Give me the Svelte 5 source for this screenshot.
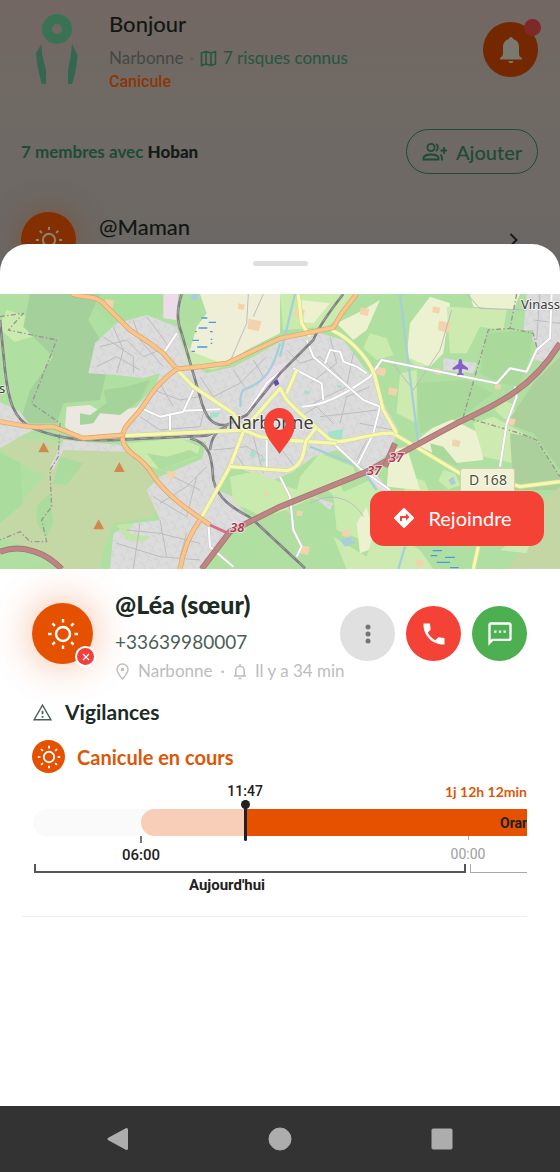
<script lang="ts">
  const HOUR = 18;
  const DAY = 24 * HOUR + 3;

  const start = 6;
  const now = 11 + 47 / 60;

  const rays = [0, 45, 90, 135, 180, 225, 270, 315];

  // map layers, drawn back to front
  const areas = [
    { color: '#a4d09b', d: 'M90 12H300L265 90 330 200 300 330 190 340 170 400 60 400 90 300 160 200 70 110Z' },
    { color: '#abdf9e', d: 'M300 12H500L480 80 330 100 290 50Z' },
    { color: '#c4d8a6', d: 'M190 478 375 480 440 520 480 620 460 680 340 700 310 780 300 837H190L130 790 0 740V600L60 640 130 560 0 480V440L160 450Z' },
    { color: '#a9dc9d', d: 'M180 500 250 520 200 585 160 580ZM0 490 60 520 70 640 0 700ZM110 650 150 610 160 700 140 740 110 700Z' },
    { color: '#dcdcdd', d: 'M285 160 350 100 440 75 530 110 560 210 620 250 700 230 760 200 850 150 960 130 1030 150 1090 230 1120 260 1150 340 1195 420 1165 490 1100 540 1010 480 940 500 880 545 820 570 700 530 640 600 600 530 620 455 500 445 370 430 400 360 470 280 480 250 430 265 350 255 265 250Z' },
    { color: '#dcdcdd', d: 'M440 600 480 560 620 500 650 600 700 620 750 690 660 760 600 837H330L340 730 400 700 480 690Z' },
    { color: '#dcdcdd', d: 'M0 335 60 365 100 420 60 440 0 475ZM190 450 360 465 380 485 190 480 160 540 150 530Z' },
    { color: '#dcdcdd', d: 'M1580 12H1680V170L1640 215 1600 210 1610 160 1570 130Z' },
    { color: '#efefd8', d: 'M600 12H840V130L740 180 680 225 600 210 570 180 590 110 620 70Z' },
    { color: '#ece8e0', d: 'M200 350 270 345 310 370 420 350 390 400 360 435 240 440 195 410Z' },
    { color: '#a5d49b', d: 'M240 370 270 375 320 340 310 300 380 290 450 270 420 330 360 375 300 370 280 400 240 405Z' },
    { color: '#c9ebab', d: 'M380 460 540 445 600 470 590 500 480 540 430 520Z' },
    { color: '#aedd9f', d: 'M480 540 560 510 600 495 570 480 500 500 440 490Z' },
    { color: '#ecdce8', d: 'M490 12H535L530 90 490 85Z' },
    { color: '#b0dda0', d: 'M545 45 600 40 605 90 560 110 540 80Z' },
    { color: '#c9ebae', d: 'M545 140 575 185 680 225 640 240 560 225Z' },
    { color: '#e8dce8', d: 'M800 240 860 215 850 270 770 350 740 360ZM1105 560 1130 555 1170 605 1140 600Z' },
    { color: '#c9ebae', d: 'M690 560 760 545 850 580 870 680 800 690 750 660 700 640ZM840 12H1060L1010 90 980 110 850 120Z' },
    { color: '#b1dfa2', d: 'M750 690 860 660 990 830 960 837H850L760 760Z' },
    { color: '#c9ebae', d: 'M900 560 960 490 1060 530 1070 560 880 650ZM1000 620 1110 570 1160 620 1110 680 1110 760 1010 720Z' },
    { color: '#ecf1d0', d: 'M900 30 990 40 940 100 900 95ZM1010 100 1090 60 1140 30 1100 120 1060 150Z' },
    { color: '#ecf1d0', d: 'M1230 100 1290 20 1350 40 1330 190 1290 230 1220 200ZM1340 380 1440 430 1450 510 1360 520 1240 460Z' },
    { color: '#ecf1d0', d: 'M1170 480 1220 470 1260 600 1160 590ZM1410 12H1560L1540 60 1420 50ZM1070 700 1100 650 1130 770 1080 790Z' },
    { color: '#cdebb0', d: 'M1340 50 1520 60 1510 120 1440 110 1400 190 1350 190ZM1200 250 1250 240 1250 400 1190 370ZM1420 400 1480 380 1570 430 1540 520 1450 500Z' },
    { color: '#a9d99b', d: 'M1460 130 1600 120 1590 200 1560 290 1500 280 1440 250ZM1250 280 1400 270 1480 310 1400 370 1260 430ZM1290 460 1330 470 1380 530 1300 500Z' },
    { color: '#acd09c', d: 'M1530 430 1600 440 1680 560V600H1540ZM1600 280 1680 200V540L1600 430 1520 400Z' },
    { color: '#c3d6a4', d: 'M1640 620 1680 590V837H1520L1570 780Z' },
    { color: '#cdebb0', d: 'M1000 740 1100 800 1130 700 1260 780 1300 837H1040ZM1570 730 1630 640 1610 700 1580 790 1500 780Z' },
    { color: '#dcdcdd', d: 'M940 620 1000 640 990 660ZM1330 205 1430 220 1420 250 1330 240Z' }
  ];

  // [x, y, size]
  const fields = [
    [330, 40, 26], [765, 105, 38], [725, 50, 20], [900, 70, 30], [1095, 65, 26], [1335, 110, 36], [1310, 60, 22],
    [1145, 245, 28], [1180, 305, 26], [1370, 460, 24], [1495, 290, 18], [1535, 395, 24], [515, 555, 26],
    [915, 780, 30], [1040, 730, 24], [1260, 820, 24], [900, 670, 18], [800, 610, 14], [1315, 245, 20]
  ];

  const meadows = [
    [20, 60, 60], [120, 300, 44], [390, 60, 50], [620, 130, 34], [640, 245, 40], [960, 20, 34], [1110, 130, 50],
    [1240, 170, 40], [1300, 350, 30], [1230, 560, 44], [1330, 540, 36], [990, 570, 30], [860, 590, 34],
    [1170, 740, 50], [1090, 820, 40], [740, 610, 34], [1500, 330, 36], [1640, 300, 28], [400, 740, 50]
  ];

  const rail = [
    'M545 12C530 60 530 90 545 130L600 320C615 380 635 410 680 405L740 375 840 250 940 150C960 100 1000 50 1030 12',
    'M0 90 15 240C25 330 40 390 100 415 180 450 270 455 380 448L620 437 680 410',
    'M570 445C640 460 635 520 640 570 660 650 740 670 760 690L915 835',
    'M630 480C635 440 650 420 680 410'
  ];

  const orange = [
    'M215 12C260 25 290 15 315 45L390 120 450 160 490 190 530 237 600 230 680 220 840 145 1000 113 1025 70 1070 12',
    'M530 237C460 290 450 320 425 355 390 400 365 410 368 450 380 500 420 490 455 550 500 620 580 670 630 705',
    'M0 395C60 405 90 415 160 410L250 445 370 435',
    'M600 690C570 730 550 780 540 837'
  ];

  const yellow = [
    'M370 437 730 420 840 295 860 330 900 370 980 440C1010 480 1120 420 1180 430L1380 550C1440 570 1540 580 1560 590L1680 575',
    'M530 237 580 290 640 330 700 370 730 420 780 440 850 450 1010 460',
    'M730 425 690 530 600 690',
    'M690 530 860 542C920 530 910 460 920 450L950 410',
    'M995 120C1060 150 1120 220 1130 280L1150 360 1190 430',
    'M895 12 905 100 930 140M890 240 860 310',
    'M1420 837 1435 770'
  ];

  const white = [
    'M530 130 490 190',
    'M425 355 480 380 550 365 580 300M510 370V420M550 362 660 358',
    'M740 370 800 280 840 245',
    'M905 350C970 350 1040 310 1110 260L1145 210 1490 280 1530 235 1580 245 1610 180 1650 145 1655 12',
    'M880 235 965 280 970 330M920 150 940 200 1010 260 1090 330 1140 350 1120 430 1070 530M975 220 990 180 1020 185 1030 215 1070 230 1100 250',
    'M1000 460 1080 535 1170 600M800 450V530M840 560 870 620 880 720 905 770 890 800',
    'M1545 290 1550 320 1520 400 1500 530M625 700 630 770 700 830'
  ];

  const streets = [
    'M300 170 380 150 430 200 480 180M290 230 350 200 420 240M340 110 370 180 350 250M400 90 420 150 490 230M440 80 500 160M310 140 400 200 400 250',
    'M460 300 540 330 600 320M480 280 520 350M600 260 640 320 720 280 800 200M700 240 740 300M760 210 790 260M420 380 480 420 600 410 610 370',
    'M480 640 560 590 620 530M520 560 600 600M460 620 560 680 590 560M380 720 480 730 600 760M420 700 400 837M480 690 500 800M350 760 480 800 600 810M560 730 540 800',
    'M860 180 900 220 960 200 1030 270M990 140 1010 220 930 280M1060 190 1040 290 940 340M1110 290 1040 320 1020 400M1130 360 1050 370 960 380M1180 420 1080 400M1100 450 1070 510M900 380 950 350 1000 400',
    'M640 480 740 470 790 500M700 480 740 540M760 440 790 550M840 470 890 540M1590 40 1670 60M1600 90 1680 100M1620 12 1610 150',
    'M745 12 740 100 690 215M790 12 760 80M1355 60 1320 180 1240 300 1170 210M930 640C1000 600 1060 630 1090 680M1400 12 1440 55 1580 60'
  ];

  const motorway = [
    'M0 785C70 760 140 790 185 837',
    'M605 837 690 725 840 650 1100 545 1380 395C1500 340 1600 290 1680 160',
    'M1155 530 1185 460'
  ];

  const paths = [
    'M0 80 70 70 25 120 170 150 95 340 180 400 175 500 150 540 155 650 125 690 140 755 90 755 60 725 0 750',
    'M1550 12 1530 115 1465 120 1390 380 1560 430 1610 450 1680 560M1530 115 1600 130 1615 190'
  ];

  const peaks = [
    [131, 473], [358, 532], [296, 704]
  ];
</script>

{#snippet sun(size: number)}
  <svg width={size} height={size} viewBox="0 0 32 32" fill="none" stroke="currentColor" stroke-width="2.400">
    <circle cx="16" cy="16" r="7" />
    {#each rays as angle}
      <path d="M16 1v3.5" transform="rotate({angle} 16 16)" />
    {/each}
  </svg>
{/snippet}

<div class="phone">
  <main class="home">
    <header class="hello">
      <svg class="logo" width="42" height="70" viewBox="0 0 42 70">
        <circle cx="21" cy="15" r="10" fill="none" stroke="#397353" stroke-width="10" />
        <path d="M5.500 30L0 39C1 51 3 61 6 70H10V56L6 40ZM36 30L41.500 41C41 52 39 61 36 70H32V56L35 40Z" fill="#346650" />
      </svg>
      <div class="intro">
        <h1>Bonjour</h1>
        <p class="place">
          <span>Narbonne</span>
          <span class="sep">·</span>
          <svg width="17" height="17" viewBox="0 0 17 17" fill="none" stroke="#23573e" stroke-width="1.600">
            <path d="M1.500 3l4.500-1.500 5 1.500 4.500-1.500v12.500L11 15.500 6 14l-4.500 1.500zM6 1.500V14M11 3v12.500" />
          </svg>
          <a href="#risques">7 risques connus</a>
        </p>
        <p class="alert">Canicule</p>
      </div>
      <button class="bell" aria-label="Notifications">
        <svg width="24" height="28" viewBox="0 0 24 28" fill="#79796f">
          <path d="M12 1c1.500 0 2 1 2 2 4 1 6 4 6 8v7c0 2 1 3 3 4v1.500H1V22c1-1 3-2 3-4v-7c0-4 2-7 6-8 0-1 .5-2 2-2zM9.500 25h5c-.5 3-4.500 3-5 0z" />
        </svg>
        <span class="dot"></span>
      </button>
    </header>

    <div class="members">
      <p>7 membres avec <strong>Hoban</strong></p>
      <button class="add">
        <svg width="26" height="18" viewBox="0 0 26 18" fill="none" stroke="currentColor" stroke-width="1.800">
          <circle cx="9" cy="4.500" r="3.600" />
          <path d="M1.500 16.500v-2c1-2 4-3 7.500-3s6.500 1 7.500 3v2zM14 1c2.500 1 2.500 6 0 7M18.500 11.500c1.500 1 1.500 3 1.500 6M22 4v7M18.500 7.500H25" />
        </svg>
        Ajouter
      </button>
    </div>

    <div class="member">
      <span class="avatar">{@render sun(28)}</span>
      <h2>@Maman</h2>
      <svg class="chevron" width="10" height="16" viewBox="0 0 10 16" fill="none" stroke="#1b1b1b" stroke-width="2">
        <path d="M1.500 2l6 6-6 6" />
      </svg>
    </div>
  </main>

  <section class="sheet">
    <div class="grip"><span></span></div>

    <div class="map">
      <svg class="tiles" viewBox="0 0 560 275" preserveAspectRatio="xMidYMid slice">
        <defs>
          <pattern id="blocks" width="34" height="30" patternUnits="userSpaceOnUse" patternTransform="rotate(24)">
            <path d="M0 8H20V30M20 18H34M8 8V0" fill="none" stroke="#c6c6c8" stroke-width="2" />
          </pattern>
        </defs>
        <g transform="translate(0 -4) scale(0.33333)" fill="none" stroke-linejoin="round">
          <path d="M0 0H1680V860H0Z" fill="#afe0a1" />
          {#each meadows as [x, y, s]}
            <path d="M{x} {y}l{s} {s * 0.3} {s * 0.4} {s} {-s} {s * 0.3} {-s * 0.8} {-s * 0.7}z" fill="#c9ebae" />
          {/each}
          {#each areas as area}
            <path d={area.d} fill={area.color} />
            {#if area.color === '#dcdcdd'}
              <path d={area.d} fill="url(#blocks)" opacity="0.6" />
            {/if}
          {/each}
          {#each fields as [x, y, s]}
            <path d="M{x - s / 2} {y - s / 2}l{s} {s * 0.2} {-s * 0.2} {s * 0.8} {-s * 0.9} {-s * 0.2}z" fill="#f3d3ad" />
          {/each}
          <path d="M350 705 400 700 385 730 450 740 430 755 380 750Z" fill="#c4e5a8" />
          <path d="M630 370l30-5-5 15-25 5zM755 480l14 12-10 14-10-10zM785 500l12 8-6 10-10-6zM985 425l45-8-5 30-40 5zM915 300l16 6-8 10-12-8zM1010 285h16v8h-14z" fill="#a5e2cc" />
          {#each streets as d}
            <path {d} stroke="#bdbcc0" stroke-width="3" />
          {/each}
          <path d="M840 160C820 240 790 280 730 300 715 320 725 340 720 350M1200 12 1225 220 1255 460M885 12 840 200M930 470 1080 530 1130 600M1215 770 1195 837" stroke="#a6cfd8" stroke-width="7" />
          {#each paths as d}
            <path {d} stroke="#9f9297" stroke-width="4" stroke-dasharray="15 7 4 7" />
          {/each}
          {#each white as d}
            <path {d} stroke="#c8c8c8" stroke-width="9" />
            <path {d} stroke="#fff" stroke-width="6" />
          {/each}
          {#each rail as d}
            <path {d} stroke="#808083" stroke-width="8" />
            <path {d} stroke="#b9b9b9" stroke-width="2" stroke-dasharray="22 18" />
          {/each}
          {#each yellow as d}
            <path {d} stroke="#d5d996" stroke-width="14" />
            <path {d} stroke="#f5f8ae" stroke-width="10" />
          {/each}
          {#each orange as d}
            <path {d} stroke="#d7a46a" stroke-width="15" />
            <path {d} stroke="#fac48b" stroke-width="11" />
          {/each}
          <path d="M630 705 685 730" stroke="#d56e88" stroke-width="9" />
          {#each motorway as d}
            <path {d} stroke="#a97374" stroke-width="18" />
            <path {d} stroke="#bd8583" stroke-width="13" />
          {/each}
          <path d="M604 84h18M626 97h22M596 114h26M585 125h5M577 151h20M592 171h30M575 184h10M630 125h8M632 148h5M632 160h5M1298 782h28M1292 797h20M1335 802h30M1310 817h40M1350 833h26" stroke="#4a9ade" stroke-width="4" />
          <path d="M574 12h20v18h-20zM1020 750l30-10 15 20-30 10zM1345 570l15-10 8 20-14 6z" fill="#a9cdda" />
          {#each peaks as [x, y]}
            <path d="M{x - 16} {y + 14}H{x + 16}L{x} {y - 16}Z" fill="#d08a4d" />
          {/each}
          <path d="M1381 207q6 0 6 14l17 13v6l-17-4-2 12 6 5v3l-10-2-10 2v-3l6-5-2-12-17 4v-6l17-13q0-14 6-14z" fill="#8461c4" />
          <path d="M820 275 832 268 838 282 826 289Z" fill="#5e50a8" />
        </g>
        <g class="labels">
          <text x="228" y="135" class="town">Narbonne</text>
          <text x="521" y="15" class="village">Vinass</text>
          <text x="-1" y="99" class="village">s</text>
          <g class="exits">
            <text x="230" y="238">38</text>
            <text x="367" y="181">37</text>
            <text x="389" y="168">37</text>
          </g>
          <rect x="461" y="175" width="53" height="23" rx="2" fill="#f0f1d4" stroke="#d2d3a7" />
          <text x="469" y="191" class="road">D 168</text>
        </g>
        <path
          fill="#f44336"
          fill-rule="evenodd"
          d="M279.500 160C273 150 264 142 264 130C264 121 271 114 279.500 114S295 121 295 130C295 142 286 150 279.500 160ZM279.500 124a6 6 0 1 0 0 12 6 6 0 0 0 0-12z"
        />
      </svg>
      <button class="join">
        <svg width="24" height="24" viewBox="0 0 24 24" fill="currentColor">
          <path d="M21.710 11.290l-9-9c-.39-.39-1.020-.39-1.410 0l-9 9c-.39.39-.39 1.020 0 1.410l9 9c.39.39 1.020.39 1.410 0l9-9c.39-.38.39-1.010 0-1.410zM14 14.500V12h-4v3H8v-4c0-.55.45-1 1-1h5V7.500l3.500 3.500-3.500 3.500z" />
        </svg>
        Rejoindre
      </button>
    </div>

    <div class="contact">
      <span class="avatar large">
        {@render sun(32)}
        <span class="status">
          <svg width="8" height="8" viewBox="0 0 8 8" stroke="#fff" stroke-width="1.200">
            <path d="M1 1l6 6M7 1L1 7" />
          </svg>
        </span>
      </span>
      <div class="who">
        <h2>@Léa (sœur)</h2>
        <a class="tel" href="tel:+33639980007">+33639980007</a>
        <p class="seen">
          <svg width="15" height="17" viewBox="0 0 15 17" fill="none" stroke="currentColor" stroke-width="1.400">
            <path d="M7.500 16C4 12 2 9.500 2 6.500a5.500 5.500 0 0 1 11 0C13 9.500 11 12 7.500 16z" />
            <circle cx="7.500" cy="6.500" r="1" fill="currentColor" />
          </svg>
          <span>Narbonne</span>
          <span>·</span>
          <svg width="14" height="17" viewBox="0 0 14 17" fill="none" stroke="currentColor" stroke-width="1.500">
            <path d="M1 13h12M2.800 13V7.500a4.200 4.200 0 0 1 8.400 0V13M7 3V1M5.500 15.500h3" />
          </svg>
          <span>Il y a 34 min</span>
        </p>
      </div>
      <div class="actions">
        <button class="more" aria-label="Plus">
          <svg width="6" height="20" viewBox="0 0 6 20" fill="#757575">
            <circle cx="3" cy="3" r="2.500" />
            <circle cx="3" cy="10" r="2.500" />
            <circle cx="3" cy="17" r="2.500" />
          </svg>
        </button>
        <button class="call" aria-label="Appeler">
          <svg width="28" height="28" viewBox="0 0 24 24" fill="#fff">
            <path d="M21 15.460l-5.270-.61-2.520 2.520a15.045 15.045 0 0 1-6.590-6.590l2.530-2.530L8.540 3H3.030C2.450 13.180 10.820 21.550 21 20.970v-5.510z" />
          </svg>
        </button>
        <button class="sms" aria-label="Message">
          <svg width="28" height="28" viewBox="0 0 24 24" fill="#fff">
            <path d="M20 2H4c-1.100 0-1.990.9-1.990 2L2 22l4-4h14c1.100 0 2-.9 2-2V4c0-1.100-.9-2-2-2zm0 14H5.170L4 17.170V4h16v12zM7 9h2v2H7zm4 0h2v2h-2zm4 0h2v2h-2z" />
          </svg>
        </button>
      </div>
    </div>

    <div class="alerts">
      <h3>
        <svg width="21" height="21" viewBox="0 0 24 24" fill="#4b5f57">
          <path d="M12 5.200L20.200 19.400H3.800L12 5.200M12 2L1 21h22L12 2zm1 14h-2v2h2v-2zm0-6h-2v4h2v-4z" />
        </svg>
        Vigilances
      </h3>
      <h4><span class="badge">{@render sun(24)}</span>Canicule en cours</h4>

      <div class="timeline">
        <p class="left">1j 12h 12min</p>
        <div class="track">
          <div class="bar past" style="left: {start * HOUR}px"></div>
          <div class="bar current" style="left: {now * HOUR}px">
            <span>Orange</span>
          </div>
        </div>
        <div class="now" style="left: {now * HOUR}px">
          <time>11:47</time>
          <i></i>
        </div>
        <div class="hours">
          <time style="left: {start * HOUR}px">06:00</time>
          <time class="next" style="left: {DAY}px">00:00</time>
        </div>
        <div class="days">
          <span class="day" style="width: {24 * HOUR}px"></span>
          <span class="day next"></span>
        </div>
        <p class="today" style="width: {24 * HOUR}px"><span>Aujourd'hui</span></p>
      </div>
    </div>
  </section>

  <nav>
    <button aria-label="Retour">
      <svg width="24" height="24" viewBox="0 0 24 24"><path d="M20.500 2.500v19L3 12z" stroke-linejoin="round" stroke-width="3" /></svg>
    </button>
    <button aria-label="Accueil">
      <svg width="24" height="24" viewBox="0 0 24 24"><circle cx="12" cy="12" r="11" /></svg>
    </button>
    <button aria-label="Applications">
      <svg width="24" height="24" viewBox="0 0 24 24"><rect x="2" y="2" width="20" height="20" rx="1" stroke-width="1" /></svg>
    </button>
  </nav>
</div>

<style>
  :global(body) {
    background: #fff;
  }

  .phone {
    min-height: 100vh;
    display: flex;
    flex-direction: column;
    font-family: Lato, 'Open Sans', sans-serif;
    color: #1d2b25;
  }

  h1, h2, h3, h4, p {
    margin: 0;
  }

  button {
    border: none;
    padding: 0;
    font: inherit;
    color: inherit;
    cursor: pointer;
    display: flex;
    align-items: center;
    justify-content: center;
  }

  a {
    text-decoration: none;
  }

  svg {
    display: block;
    flex-shrink: 0;
  }

  /* dimmed screen behind the sheet */
  .home {
    height: 284px;
    box-sizing: border-box;
    overflow: hidden;
    background: linear-gradient(#736763, #6f6a64 110px, #6b6765);
    padding: 12px 22px 0 21px;
    color: #111714;
  }

  .hello {
    display: flex;
    height: 80px;
  }

  .logo {
    margin: 2px 31px 0 15px;
  }

  .intro {
    flex: 1;
  }

  h1, .member h2 {
    font-size: 22px;
    line-height: 24px;
    font-weight: 500;
  }

  .place {
    display: flex;
    align-items: center;
    gap: 6px;
    margin-top: 10px;
    font-size: 17px;
    line-height: 24px;
    color: #414845;
    white-space: nowrap;
  }

  .place .sep {
    color: #575d58;
  }

  .place a {
    color: #23573e;
  }

  .alert {
    font: 500 16px/24px Roboto, sans-serif;
    color: #8c3604;
  }

  .bell {
    position: relative;
    width: 55px;
    height: 55px;
    margin-top: 10px;
    border-radius: 50%;
    background: #732800;
  }

  .dot {
    position: absolute;
    top: -3px;
    right: -3px;
    width: 17px;
    height: 17px;
    border-radius: 50%;
    background: #7d2a27;
  }

  .members {
    display: flex;
    align-items: center;
    justify-content: space-between;
    margin-top: 37px;
    font-size: 17px;
    font-weight: 700;
    color: #1e4b35;
  }

  .members strong {
    color: #141a17;
  }

  .add {
    width: 132px;
    height: 45px;
    box-sizing: border-box;
    gap: 8px;
    border: 1px solid #1e4b35;
    border-radius: 23px;
    background: none;
    font-size: 20px;
    font-weight: 500;
  }

  .member {
    display: flex;
    margin-top: 38px;
  }

  .member h2 {
    flex: 1;
    margin: 3px 0 0 23px;
  }

  .avatar {
    position: relative;
    display: flex;
    align-items: center;
    justify-content: center;
    width: 55px;
    height: 55px;
    flex-shrink: 0;
    border-radius: 50%;
    background: #842f00;
    color: #8d8079;
    box-shadow: 0 0 32px rgba(140, 60, 10, 0.45);
  }

  .chevron {
    margin: 20px 19px 0 0;
  }

  .sheet {
    position: relative;
    flex: 1;
    margin-top: -40px;
    border-radius: 28px 28px 0 0;
    background: #fff;
  }

  .grip {
    height: 50px;
    display: flex;
    justify-content: center;
  }

  .grip span {
    width: 55px;
    height: 5px;
    margin-top: 17px;
    border-radius: 3px;
    background: #dedede;
  }

  .map {
    position: relative;
    height: 275px;
    overflow: hidden;
  }

  .tiles {
    width: 100%;
    height: 100%;
  }

  .labels {
    font-family: 'Noto Sans', sans-serif;
    fill: #3c3c3c;
    stroke: rgba(255, 255, 255, 0.6);
    stroke-width: 2px;
    paint-order: stroke;
  }

  .town {
    font-size: 18px;
  }

  .village {
    font-size: 13px;
  }

  .road {
    font-size: 14px;
    fill: #4f5136;
  }

  .exits {
    font-size: 13px;
    font-style: italic;
    font-weight: 600;
    fill: #ad3551;
  }

  .join {
    position: absolute;
    right: 16px;
    bottom: 23px;
    width: 174px;
    height: 55px;
    box-sizing: border-box;
    padding: 0 10px 1px 0;
    gap: 12px;
    border-radius: 14px;
    background: #f44336;
    color: #fff;
    font-size: 20px;
  }

  .contact {
    display: flex;
    padding: 21px 33px 0 32px;
  }

  .large {
    width: 61px;
    height: 61px;
    margin-top: 13px;
    background: #e65100;
    color: #fff;
    box-shadow: 0 0 40px rgba(230, 81, 0, 0.42);
  }

  .status {
    position: absolute;
    right: -3px;
    bottom: -3px;
    width: 17px;
    height: 17px;
    border: 2px solid #fff;
    border-radius: 50%;
    background: #f1403c;
    display: flex;
    align-items: center;
    justify-content: center;
  }

  .who {
    position: relative;
    flex: 1;
    min-width: 0;
    margin-left: 22px;
    white-space: nowrap;
  }

  .who h2 {
    font-size: 25px;
    line-height: 28px;
    font-weight: 900;
  }

  .tel {
    display: block;
    margin-top: 10px;
    font-size: 19px;
    line-height: 28px;
    color: #4b5f57;
  }

  .seen {
    display: flex;
    align-items: center;
    gap: 8px;
    margin-top: 3px;
    font-size: 17px;
    line-height: 24px;
    color: #bdbdbd;
  }

  .actions {
    display: flex;
    gap: 11px;
    margin-top: 16px;
  }

  .actions button {
    width: 55px;
    height: 55px;
    border-radius: 50%;
  }

  .more {
    background: #e0e0e0;
  }

  .call {
    background: #f44336;
  }

  .sms {
    background: #4caf50;
  }

  .alerts {
    margin: 17px 33px 0 22px;
    padding: 0 0 21px 10px;
    border-bottom: 1px solid #eee;
  }

  h3, h4 {
    display: flex;
    align-items: center;
    gap: 12px;
    font-size: 20px;
    line-height: 24px;
    font-weight: 700;
  }

  h3 {
    font-size: 21px;
  }

  h4 {
    margin-top: 16px;
    color: #dc5707;
  }

  .badge {
    display: flex;
    align-items: center;
    justify-content: center;
    width: 33px;
    height: 33px;
    border-radius: 50%;
    background: #e65100;
    color: #fff;
  }

  .timeline {
    position: relative;
    margin-left: 1px;
    padding-top: 9px;
    overflow: hidden;
    font-family: Roboto, sans-serif;
    color: #212121;
  }

  .left {
    font: 700 14px/20px Lato, sans-serif;
    color: #dc5707;
    text-align: right;
  }

  .track {
    position: relative;
    height: 27px;
    margin-top: 7px;
    border-radius: 14px 0 0 14px;
    background: #fafafa;
    overflow: hidden;
  }

  .bar {
    position: absolute;
    top: 0;
    bottom: 0;
    right: 0;
  }

  .past {
    border-radius: 14px 0 0 14px;
    background: #f8ceb8;
  }

  .current {
    display: flex;
    align-items: center;
    justify-content: flex-end;
    background: #e65100;
    font-size: 14px;
    font-weight: 700;
  }

  .current span {
    width: 27px;
    white-space: nowrap;
  }

  .now {
    position: absolute;
    top: 9px;
    width: 0;
    display: flex;
    flex-direction: column;
    align-items: center;
    font-size: 14px;
    line-height: 18px;
    font-weight: 500;
  }

  .now i {
    width: 3px;
    height: 41px;
    border-radius: 2px;
    background: #212121;
  }

  .now i::before {
    content: '';
    display: block;
    width: 9px;
    height: 9px;
    margin-left: -3px;
    border-radius: 50%;
    background: #212121;
  }

  .hours {
    position: relative;
    height: 28px;
  }

  .hours time {
    position: absolute;
    top: 0;
    width: 0;
    display: flex;
    flex-direction: column;
    align-items: center;
    gap: 2px;
    font-size: 15px;
    line-height: 20px;
    font-weight: 500;
  }

  .hours time::before {
    content: '';
    width: 2px;
    height: 7px;
    background: #777;
  }

  .hours .next {
    font-size: 14px;
    font-weight: 400;
    color: #9e9e9e;
  }

  .hours .next::before {
    width: 1px;
    height: 4px;
    margin-bottom: 2px;
    background: #aaa;
  }

  .days {
    display: flex;
    gap: 4px;
    margin-left: 1px;
  }

  .day {
    box-sizing: border-box;
    height: 9px;
    flex-shrink: 0;
    border: 2px solid #555;
    border-top: none;
  }

  .day.next {
    flex: 1;
    border: solid #aaa;
    border-width: 0 0 1px 1px;
  }

  .today {
    display: flex;
    justify-content: center;
    margin-top: 2px;
    font-size: 15px;
    line-height: 20px;
    font-weight: 700;
  }

  .today span {
    margin-right: 44px;
  }

  nav {
    height: 66px;
    display: flex;
    align-items: center;
    justify-content: space-evenly;
    background: #333;
  }

  nav button {
    width: 48px;
    height: 48px;
    margin: 0 20px;
    background: none;
  }

  nav svg {
    fill: #adadad;
    stroke: #adadad;
  }
</style>
